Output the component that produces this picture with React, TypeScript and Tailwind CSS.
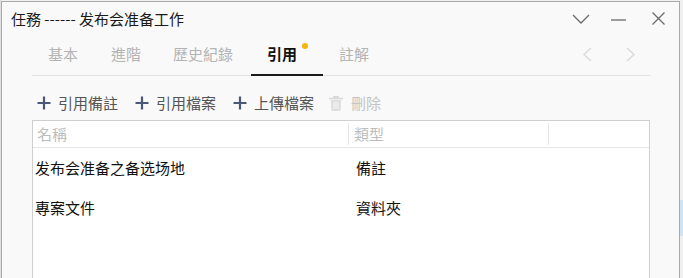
import React from "react";

const font = { fontFamily: '"Noto Sans CJK TC", "Noto Sans CJK SC", sans-serif' };

function Plus() {
  return (
    <svg width="14" height="14" viewBox="0 0 14 14">
      <path d="M7 0.5V13.5M0.5 7H13.5" stroke="#4a5878" strokeWidth="2.2" fill="none" />
    </svg>
  );
}

const tabs = [
  { t: "基本", w: "w-[63px]" },
  { t: "進階", w: "w-[62px]" },
  { t: "歷史紀錄", w: "w-[94px]" },
  { t: "引用", w: "w-[72px]" },
  { t: "註解", w: "w-[62px]" },
];

export default function App() {
  return (
    <div className="w-[683px] h-[278px] bg-[#f0f0f0] flex overflow-hidden" style={font}>
      <div className="w-[1px] bg-[#e0e0e0]" />
      <div className="mt-[1px] w-[679px] h-[290px] bg-[#f9f9f9] border-l border-t border-r border-[#a9a9a9] flex flex-col">
        {/* Title bar */}
        <div className="h-[32px] flex items-center pl-[9px] pr-[14px]">
          <div className="text-[15px] text-[#1a1a1a] leading-none">任務 ------ 发布会准备工作</div>
          <div className="flex-1" />
          <svg width="18" height="11" viewBox="0 0 18 11" className="mr-[21px] mt-[2px]">
            <path d="M1 1L9 9L17 1" stroke="#6a6a6a" strokeWidth="1.3" fill="none" />
          </svg>
          <svg width="15" height="2" viewBox="0 0 15 2" className="mr-[26px] mt-[4px]">
            <path d="M0 1H15" stroke="#6a6a6a" strokeWidth="1.3" />
          </svg>
          <svg width="13" height="13" viewBox="0 0 13 13">
            <path d="M0.5 0.5L12.5 12.5M12.5 0.5L0.5 12.5" stroke="#6a6a6a" strokeWidth="1.3" />
          </svg>
        </div>
        {/* Tabs */}
        <div className="ml-[30px] w-[618px] h-[42px] border-b border-[#e2e2e2] flex items-stretch relative">
          {tabs.map(({ t, w }) => {
            const active = t === "引用";
            return (
              <div
                key={t}
                className={
                  "relative flex items-center pl-4 text-[15px] " +
                  w +
                  " " +
                  (active ? "text-[#111] font-bold" : "text-[#b4b4b4]")
                }
              >
                {t}
                {active && (
                  <>
                    <span className="absolute left-[51px] top-[9px] w-[6px] h-[6px] rounded-full bg-[#f5b50a]" />
                    <span className="absolute left-0 right-0 bottom-[-1px] h-[2px] bg-[#1a1a1a]" />
                  </>
                )}
              </div>
            );
          })}
          <div className="flex-1" />
          <div className="flex items-center gap-[34px] pr-[14px]">
            <svg width="10" height="15" viewBox="0 0 10 15">
              <path d="M9 1L2 7.5L9 14" stroke="#dcdcdc" strokeWidth="1.6" fill="none" />
            </svg>
            <svg width="10" height="15" viewBox="0 0 10 15">
              <path d="M1 1L8 7.5L1 14" stroke="#dcdcdc" strokeWidth="1.6" fill="none" />
            </svg>
          </div>
        </div>
        {/* Toolbar */}
        <div className="mt-[13px] h-[28px] ml-[35px] flex items-center gap-[17px] text-[15px] text-[#555]">
          <div className="flex items-center gap-[7px]"><Plus /><span>引用備註</span></div>
          <div className="flex items-center gap-[7px]"><Plus /><span>引用檔案</span></div>
          <div className="flex items-center gap-[7px]"><Plus /><span>上傳檔案</span></div>
          <div className="flex items-center gap-[8px] -ml-[2px] text-[#c4c4c4]">
            <svg width="14" height="15" viewBox="0 0 14 15">
              <path d="M0 2.5H14M5 2.5V0.8H9V2.5" stroke="#d6d6d6" strokeWidth="1.4" fill="none" />
              <path d="M1.8 4H12.2L11.5 15H2.5Z" fill="#dedede" />
              <path d="M5 6V13M7 6V13M9 6V13" stroke="#f9f9f9" strokeWidth="0.9" />
            </svg>
            <span>刪除</span>
          </div>
        </div>
        {/* Table */}
        <div className="mt-[3px] ml-[30px] w-[618px] flex-1 bg-white border border-[#cfcfcf] flex flex-col text-[15px]">
          <div className="h-[27px] border-b border-[#e6e6e6] flex items-center">
            <div className="w-[315px] h-full flex items-center pl-[4px] text-[#bdbdbd]">名稱</div>
            <div className="w-[1px] h-[22px] bg-[#e6e6e6]" />
            <div className="w-[199px] h-full flex items-center pl-[5px] text-[#bdbdbd]">類型</div>
            <div className="w-[1px] h-[22px] bg-[#e6e6e6]" />
          </div>
          <div className="h-[40px] flex items-center text-[#111]">
            <div className="w-[316px] pl-[2px]">发布会准备之备选场地</div>
            <div className="pl-[7px]">備註</div>
          </div>
          <div className="h-[41px] flex items-center text-[#111]">
            <div className="w-[316px] pl-[2px]">專案文件</div>
            <div className="pl-[7px]">資料夾</div>
          </div>
        </div>
      </div>
      <div className="flex-1 flex flex-col">
        <div className="h-[200px]" />
        <div className="h-[36px] bg-[#cfe3f7]" />
      </div>
    </div>
  );
}
